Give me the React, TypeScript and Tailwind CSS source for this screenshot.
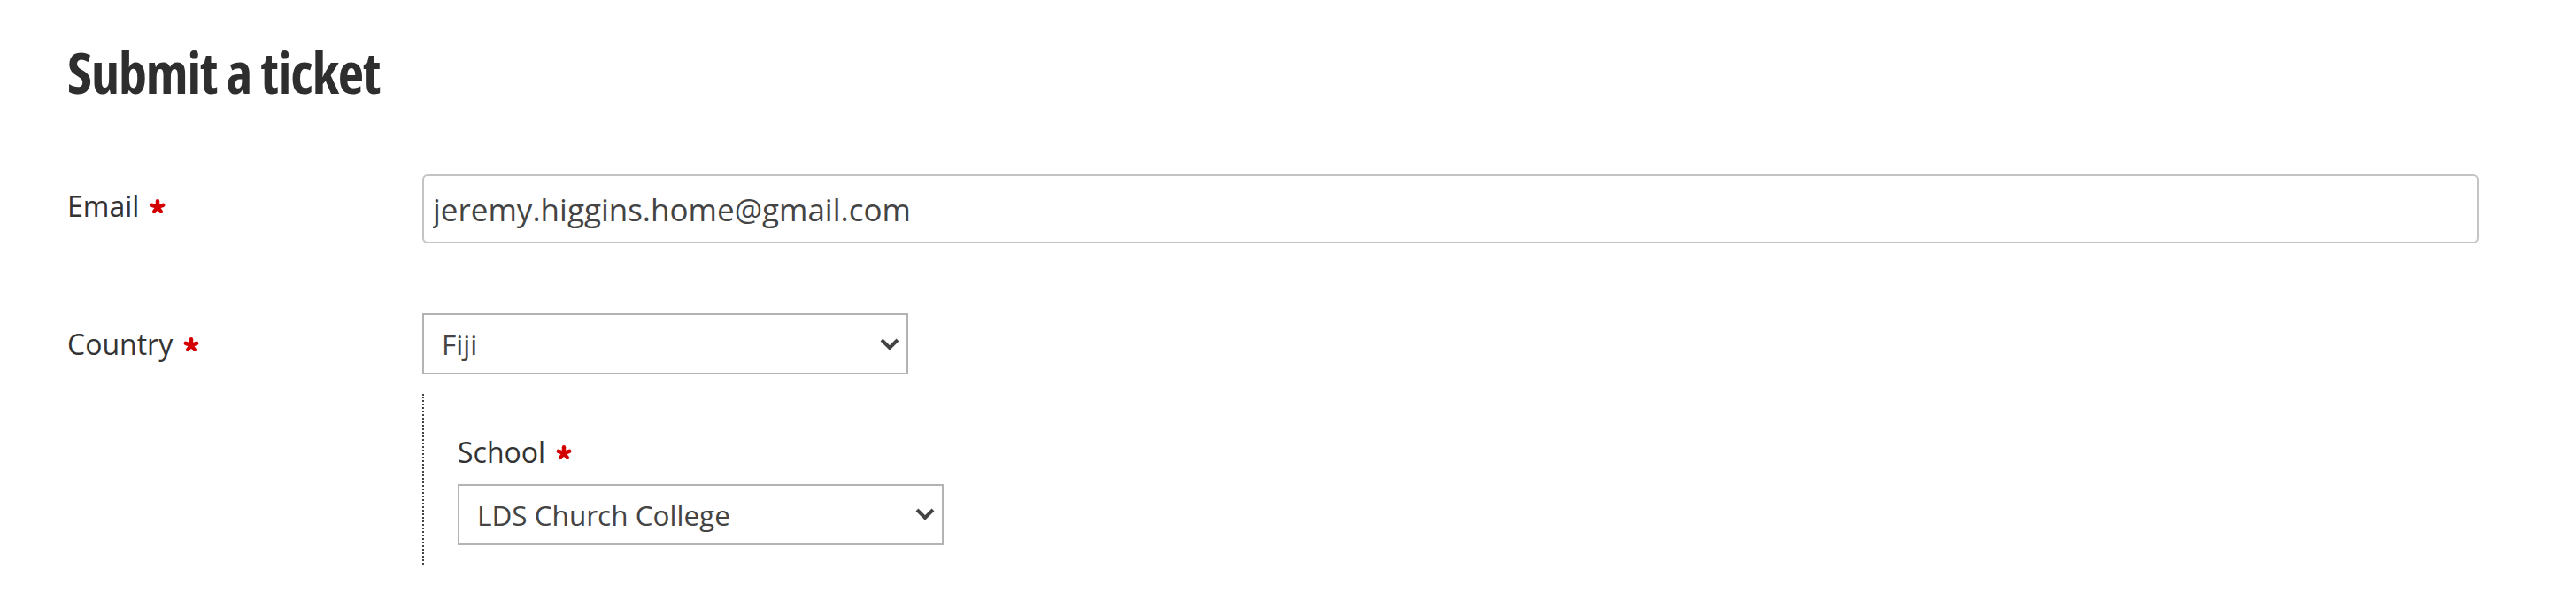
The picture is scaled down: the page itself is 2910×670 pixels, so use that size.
const FONT = "font-['Open_Sans','Noto_Sans',sans-serif]";

function Required() {
  return (
    <svg
      viewBox="-10 -10 20 18"
      className="ml-[12px] inline-block h-[16px] w-[18px] text-[#d40000]"
      aria-hidden="true"
    >
      <g stroke="currentColor" strokeWidth="5" strokeLinecap="round">
        <line x1="0" y1="0" x2="0" y2="-7.4" />
        <line x1="0" y1="0" x2="7" y2="-2.3" />
        <line x1="0" y1="0" x2="4.4" y2="6" />
        <line x1="0" y1="0" x2="-4.4" y2="6" />
        <line x1="0" y1="0" x2="-7" y2="-2.3" />
      </g>
    </svg>
  );
}

function Chevron() {
  return (
    <svg
      viewBox="0 0 22 14"
      className="pointer-events-none absolute right-[10px] top-1/2 h-[14px] w-[22px] -translate-y-1/2 text-[#444]"
      aria-hidden="true"
    >
      <path d="M2 2l9 9 9-9" fill="none" stroke="currentColor" strokeWidth="4" />
    </svg>
  );
}

function Select({ value }: { value: string }) {
  return (
    <div className="relative h-[69px] w-[549px]">
      <select
        defaultValue={value}
        className={`${FONT} h-full w-full appearance-none border-2 border-[#b3b3b3] bg-white pl-[20px] text-[31.5px] text-[#444] outline-none`}
      >
        <option>{value}</option>
      </select>
      <Chevron />
    </div>
  );
}

function Label({ children }: { children: string }) {
  return (
    <label className="flex items-center text-[32px] leading-[1.362] text-[#333]">
      {children}
      <Required />
    </label>
  );
}

export default function App() {
  return (
    <div className={`${FONT} min-h-screen bg-white pl-[76px] pr-[110px] pt-[38px]`}>
      <h1 className="text-[64px] font-bold leading-[1.362] font-stretch-condensed tracking-[-1.1px] text-[#2e2e2e]">
        Submit a ticket
      </h1>

      <div className="mt-[72px] flex items-center">
        <div className="w-[401px] shrink-0 -mt-[6px]">
          <Label>Email</Label>
        </div>
        <input
          readOnly
          value="jeremy.higgins.home@gmail.com"
          className={`${FONT} h-[78px] flex-1 rounded-[6px] border-2 border-[#c4c4c4] bg-white pl-[10px] text-[35px] text-[#444] outline-none`}
        />
      </div>

      <div className="mt-[79px] flex items-center">
        <div className="w-[401px] shrink-0">
          <Label>Country</Label>
        </div>
        <Select value="Fiji" />
      </div>

      <div className="ml-[401px] mt-[22px] border-l-2 border-dotted border-[#444] pb-[22px] pl-[38px] pt-[44px]">
        <Label>School</Label>
        <div className="mt-[14px]">
          <Select value="LDS Church College" />
        </div>
      </div>
    </div>
  );
}
